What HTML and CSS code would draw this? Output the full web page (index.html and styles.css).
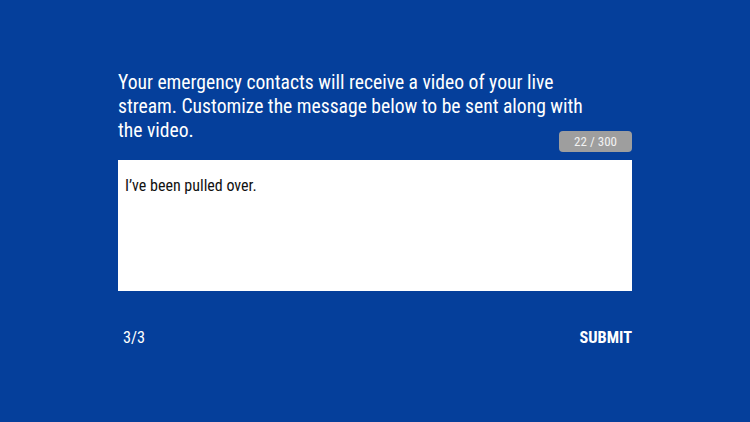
FILE: index.html
```html
<!DOCTYPE html>
<html lang="en">
<head>
<meta charset="utf-8">
<title>Message</title>
<link rel="stylesheet" href="styles.css">
</head>
<body>
<main class="panel">
  <div class="header">
    <p class="intro"><span class="intro-text">Your emergency contacts will receive a video of your live stream. Customize the message below to be sent along with</span> <span class="intro-text">the video.</span></p>
    <span class="counter">22 / 300</span>
  </div>
  <div class="message">I’ve been pulled over.</div>
  <div class="footer">
    <span class="step">3/3</span>
    <span class="submit">SUBMIT</span>
  </div>
</main>
</body>
</html>
```
FILE: styles.css
```css
html, body {
  margin: 0;
  padding: 0;
}
body {
  width: 750px;
  height: 422px;
  background: #053f9b;
  font-family: "Roboto Condensed", Roboto, sans-serif;
  color: #ffffff;
  overflow: hidden;
}
.panel {
  width: 514px;
  margin: 0 0 0 118px;
  padding-top: 71px;
  display: flex;
  flex-direction: column;
}
.header {
  display: grid;
  grid-template-columns: 1fr auto;
}
.intro {
  grid-column: 1 / -1;
  grid-row: 1;
  margin: 0;
  padding-bottom: 9px;
  max-width: 475px;
  font-size: 19.6px;
  line-height: 24px;
}
.counter {
  grid-column: 2;
  grid-row: 1;
  align-self: end;
  justify-self: end;
  height: 21px;
  line-height: 21px;
  padding: 0 15px;
  border-radius: 4px;
  background: #9e9e9e;
  color: #f2f2f2;
  font-size: 13px;
}
.message {
  margin-top: 8px;
  height: 131px;
  box-sizing: border-box;
  padding: 16px 7px;
  background: #ffffff;
  color: #111111;
  font-size: 16px;
  line-height: 20px;
}
.footer {
  margin-top: 37px;
  display: flex;
  justify-content: space-between;
  align-items: baseline;
  font-size: 16.3px;
  line-height: 20px;
}
.step {
  padding-left: 5px;
}
.submit {
  font-weight: 700;
}
```
